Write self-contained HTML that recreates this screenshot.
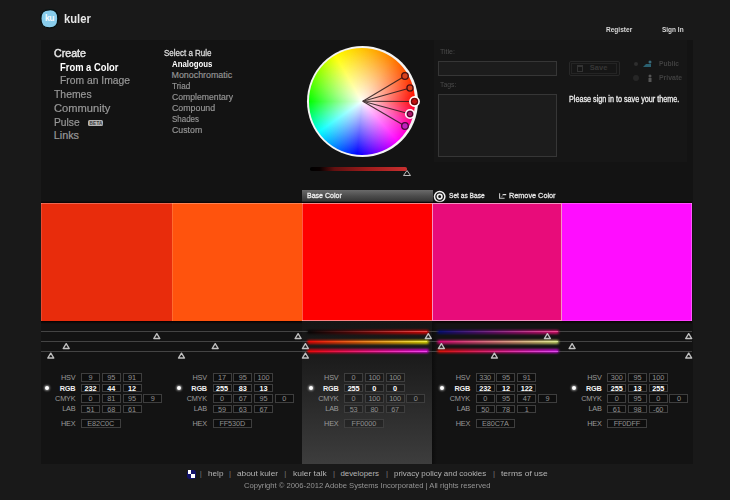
<!DOCTYPE html>
<html><head><meta charset="utf-8">
<style>
*{margin:0;padding:0;box-sizing:border-box}
html,body{width:730px;height:500px;overflow:hidden;background:#191919;font-family:"Liberation Sans",sans-serif;position:relative}
.a{position:absolute;white-space:nowrap}
.lbl{font-size:7.3px;line-height:9px;text-align:right;letter-spacing:-0.2px}
.box{height:8.6px;border:1px solid #3e3e3e;background:rgba(0,0,0,.22);font-size:7.3px;line-height:7px;text-align:center;letter-spacing:-0.1px}
</style></head><body>
<div class="a" style="left:41px;top:40px;width:652px;height:423.5px;background:#131313"></div>
<svg class="a" style="left:38px;top:7px" width="24" height="24"><path d="M11.2 2.7 C17.4 2.3 20.1 5.5 19.9 11.8 C19.8 18.2 17.6 21 11.4 20.9 C5.1 20.8 2.8 18 2.8 11.6 C2.8 5.5 5.2 3 11.2 2.7 Z" fill="#88cdec" stroke="#061010" stroke-width="1.4"/><text x="11.5" y="14.3" font-family="Liberation Sans" font-size="8.6" font-weight="bold" fill="#f4fbff" text-anchor="middle" letter-spacing="-0.4">ku</text></svg>
<div class="a" style="left:434px;top:40px;width:253px;height:122px;background:#161616"></div>
<div class="a" style="left:438px;top:61px;width:119px;height:15px;background:#1c1c1c;border:1px solid #363636"></div>
<div class="a" style="left:438px;top:94px;width:119px;height:63px;background:#1c1c1c;border:1px solid #363636"></div>
<div class="a" style="left:568.5px;top:61px;width:51px;height:15px;border:1px solid #282828;border-radius:2px;background:#161616"></div><div class="a" style="left:571px;top:63px;width:46px;height:11px;border:1px solid #242424"></div>
<div class="a" style="left:577px;top:64.5px;width:6px;height:7px;border:1px solid #333;border-top-width:2px"></div>
<div class="a" style="left:634px;top:61.5px;width:4px;height:4px;border-radius:50%;background:#2e2e2e"></div>
<div class="a" style="left:633px;top:74.5px;width:6px;height:6px;border-radius:50%;background:#262626"></div>
<svg class="a" style="left:642px;top:59px" width="12" height="26"><path d="M1 8 L4 5 L9 5 L9 8 Z" fill="#2a6070"/><circle cx="8" cy="3" r="1.5" fill="#3a6a7a"/><circle cx="8" cy="17" r="1.5" fill="#555"/><rect x="6.5" y="19" width="3" height="4" fill="#555"/></svg>
<div class="a" style="left:306.5px;top:45.8px;width:111px;height:111px;border-radius:50%;background:#f4f4f4"></div>
<div class="a" style="left:308.7px;top:48px;width:106.6px;height:106.6px;border-radius:50%;background:radial-gradient(circle closest-side,#fff 0%,rgba(255,255,255,.85) 12%,rgba(255,255,255,0) 100%),conic-gradient(from 90deg,#f00 0deg,#ff00c0 30deg,#f0f 48deg,#00f 95deg,#0ff 145deg,#0f0 180deg,#ff0 240deg,#ff8000 305deg,#f00 360deg)"></div>
<svg class="a" style="left:0;top:0" width="730" height="500">
<g stroke="#2a1a1a" stroke-width="1.1" fill="none" opacity=".85">
<line x1="362.8" y1="101.3" x2="405" y2="76"/><line x1="362.8" y1="101.3" x2="410" y2="88"/><line x1="362.8" y1="101.3" x2="414.5" y2="101.5"/><line x1="362.8" y1="101.3" x2="410" y2="114"/><line x1="362.8" y1="101.3" x2="405" y2="126"/>
</g>
<circle cx="405" cy="76" r="3.3" fill="#d8401c" stroke="#4a1010" stroke-width="1.3"/>
<circle cx="410" cy="88" r="3.1" fill="#e0401c" stroke="#4a1010" stroke-width="1.3"/>
<circle cx="414.5" cy="101.5" r="4.6" fill="#a01010" stroke="#fff" stroke-width="1.6"/>
<circle cx="414.5" cy="101.5" r="3" fill="#c01010" stroke="#4a0a0a" stroke-width="1"/>
<circle cx="410" cy="114" r="4.3" fill="#a0105a" stroke="#fff" stroke-width="1.6"/>
<circle cx="410" cy="114" r="2.7" fill="#b0106a" stroke="#4a0a2a" stroke-width="1"/>
<circle cx="405" cy="126" r="3.3" fill="#c020c0" stroke="#4a0a3a" stroke-width="1.3"/>
<path d="M407 170.5 L410.5 175.5 L403.5 175.5 Z" fill="none" stroke="#bbb" stroke-width="1"/>
</svg>
<div class="a" style="left:310px;top:167.2px;width:97px;height:3.6px;background:linear-gradient(90deg,#000 0%,#080000 10%,#601010 25%,#a01c1c 60%,#c83030 100%);border-radius:1.8px;filter:blur(0.5px)"></div>
<div class="a" style="left:302px;top:189.8px;width:130.5px;height:12px;background:linear-gradient(#6a6a6a,#4c4c4c 50%,#333)"></div>
<svg class="a" style="left:431.6px;top:189.5px" width="16" height="14"><circle cx="7.7" cy="6.6" r="5.2" fill="none" stroke="#f0f0f0" stroke-width="1.5"/><circle cx="7.7" cy="6.6" r="2.3" fill="none" stroke="#f0f0f0" stroke-width="1.6"/></svg>
<svg class="a" style="left:0;top:0" width="730" height="500"><path d="M499.6 193.2 V198.2 H504.6" fill="none" stroke="#c8c8c8" stroke-width="1.1"/><path d="M502.6 194.6 H506.2" fill="none" stroke="#e0e0e0" stroke-width="1.2"/><path d="M501.2 197 L503.2 195.4" fill="none" stroke="#777" stroke-width="0.9"/></svg>
<div class="a" style="left:41px;top:200.5px;width:651px;height:2.5px;background:linear-gradient(rgba(0,0,0,0),#0a0000)"></div>
<div class="a" style="left:41px;top:321px;width:651px;height:3px;background:linear-gradient(#080000,rgba(0,0,0,0))"></div>
<div class="a" style="left:41px;top:203px;width:130.5px;height:117.6px;background:#e82c0c;box-shadow:inset 0 1px 0 rgba(255,255,255,.28),inset 1px 0 0 rgba(255,255,255,.14);"></div>
<div class="a" style="left:171.5px;top:203px;width:130.5px;height:117.6px;background:#ff530d;box-shadow:inset 0 1px 0 rgba(255,255,255,.28),inset 1px 0 0 rgba(255,255,255,.14);"></div>
<div class="a" style="left:302px;top:203px;width:130.0px;height:117.6px;background:#ff0000;box-shadow:inset 0 1px 0 rgba(255,255,255,.5),inset 1px 0 0 rgba(255,200,160,.45),inset 0 -1px 0 rgba(255,255,255,.5);"></div>
<div class="a" style="left:432px;top:203px;width:130.0px;height:117.6px;background:#e80c7a;box-shadow:inset 0 0 0 1px rgba(255,255,255,.55);"></div>
<div class="a" style="left:562px;top:203px;width:130.0px;height:117.6px;background:#ff0dff;box-shadow:inset 0 1px 0 rgba(255,255,255,.28),inset -1px 0 0 rgba(255,255,255,.3),inset 0 -1px 0 rgba(255,255,255,.2);"></div>
<div class="a" style="left:432px;top:321px;width:5px;height:142.5px;background:linear-gradient(90deg,#0c0c0c,rgba(18,18,18,0))"></div>
<div class="a" style="left:302px;top:320.5px;width:130px;height:143px;background:linear-gradient(#151515 0%,#1b1b1b 25%,#3d3d3d 100%)"></div>
<div class="a" style="left:41px;top:331.0px;width:651px;height:1px;background:#444"></div>
<div class="a" style="left:41px;top:341.0px;width:651px;height:1px;background:#444"></div>
<div class="a" style="left:41px;top:350.5px;width:651px;height:1px;background:#444"></div>
<div class="a" style="left:306.9px;top:329.5px;width:122px;height:4px;border-radius:2px;background:linear-gradient(90deg,rgb(0,0,0),rgb(255,0,0));opacity:.78;filter:blur(1px)"></div>
<div class="a" style="left:308.4px;top:331.0px;width:119px;height:1px;background:linear-gradient(90deg,rgb(0,0,0),rgb(255,0,0));opacity:.55"></div>
<div class="a" style="left:308.4px;top:331.0px;width:119px;height:1px;background:linear-gradient(90deg,rgba(255,255,255,0),rgba(255,255,255,.25))"></div>
<div class="a" style="left:306.9px;top:339.5px;width:122px;height:4px;border-radius:2px;background:linear-gradient(90deg,rgb(255,0,0),rgb(255,255,0));opacity:.78;filter:blur(1px)"></div>
<div class="a" style="left:308.4px;top:341.0px;width:119px;height:1px;background:linear-gradient(90deg,rgb(255,0,0),rgb(255,255,0));opacity:.55"></div>
<div class="a" style="left:308.4px;top:341.0px;width:119px;height:1px;background:linear-gradient(90deg,rgba(255,255,255,0),rgba(255,255,255,.25))"></div>
<div class="a" style="left:306.9px;top:349px;width:122px;height:4px;border-radius:2px;background:linear-gradient(90deg,rgb(255,0,0),rgb(255,0,255));opacity:.78;filter:blur(1px)"></div>
<div class="a" style="left:308.4px;top:350.5px;width:119px;height:1px;background:linear-gradient(90deg,rgb(255,0,0),rgb(255,0,255));opacity:.55"></div>
<div class="a" style="left:308.4px;top:350.5px;width:119px;height:1px;background:linear-gradient(90deg,rgba(255,255,255,0),rgba(255,255,255,.25))"></div>
<div class="a" style="left:437.1px;top:329.5px;width:122px;height:4px;border-radius:2px;background:linear-gradient(90deg,rgb(0,12,122),rgb(255,12,122));opacity:.78;filter:blur(1px)"></div>
<div class="a" style="left:438.6px;top:331.0px;width:119px;height:1px;background:linear-gradient(90deg,rgb(0,12,122),rgb(255,12,122));opacity:.55"></div>
<div class="a" style="left:438.6px;top:331.0px;width:119px;height:1px;background:linear-gradient(90deg,rgba(255,255,255,0),rgba(255,255,255,.25))"></div>
<div class="a" style="left:437.1px;top:339.5px;width:122px;height:4px;border-radius:2px;background:linear-gradient(90deg,rgb(232,0,122),rgb(232,255,122));opacity:.78;filter:blur(1px)"></div>
<div class="a" style="left:438.6px;top:341.0px;width:119px;height:1px;background:linear-gradient(90deg,rgb(232,0,122),rgb(232,255,122));opacity:.55"></div>
<div class="a" style="left:438.6px;top:341.0px;width:119px;height:1px;background:linear-gradient(90deg,rgba(255,255,255,0),rgba(255,255,255,.25))"></div>
<div class="a" style="left:437.1px;top:349px;width:122px;height:4px;border-radius:2px;background:linear-gradient(90deg,rgb(232,12,0),rgb(232,12,255));opacity:.78;filter:blur(1px)"></div>
<div class="a" style="left:438.6px;top:350.5px;width:119px;height:1px;background:linear-gradient(90deg,rgb(232,12,0),rgb(232,12,255));opacity:.55"></div>
<div class="a" style="left:438.6px;top:350.5px;width:119px;height:1px;background:linear-gradient(90deg,rgba(255,255,255,0),rgba(255,255,255,.25))"></div>
<svg class="a" style="left:0;top:0" width="730" height="500"><g fill="none" stroke="#c0c0c0" stroke-width="1.4" stroke-linejoin="round"><path d="M156.8 333.7 L159.8 338.5 L153.8 338.5 Z"/><path d="M66.2 343.7 L69.2 348.5 L63.2 348.5 Z"/><path d="M50.8 353.2 L53.8 358.0 L47.8 358.0 Z"/><path d="M298.1 333.7 L301.1 338.5 L295.1 338.5 Z"/><path d="M215.2 343.7 L218.2 348.5 L212.2 348.5 Z"/><path d="M181.5 353.2 L184.5 358.0 L178.5 358.0 Z"/><path d="M428.3 333.7 L431.3 338.5 L425.3 338.5 Z"/><path d="M305.4 343.7 L308.4 348.5 L302.4 348.5 Z"/><path d="M305.4 353.2 L308.4 358.0 L302.4 358.0 Z"/><path d="M547.4 333.7 L550.4 338.5 L544.4 338.5 Z"/><path d="M441.4 343.7 L444.4 348.5 L438.4 348.5 Z"/><path d="M494.4 353.2 L497.4 358.0 L491.4 358.0 Z"/><path d="M688.7 333.7 L691.7 338.5 L685.7 338.5 Z"/><path d="M572.1 343.7 L575.1 348.5 L569.1 348.5 Z"/><path d="M688.7 353.2 L691.7 358.0 L685.7 358.0 Z"/></g></svg>
<div class="a lbl" style="left:35.40px;top:373.00px;width:40px;color:#9a9a9a;">HSV</div>
<div class="a box" style="left:81.00px;top:373.30px;width:19px;color:#909090;">9</div>
<div class="a box" style="left:101.75px;top:373.30px;width:19px;color:#909090;">95</div>
<div class="a box" style="left:122.50px;top:373.30px;width:19px;color:#909090;">91</div>
<div class="a lbl" style="left:35.40px;top:383.60px;width:40px;color:#eeeeee;font-weight:bold;">RGB</div>
<div class="a box" style="left:81.00px;top:383.90px;width:19px;color:#ffffff;font-weight:bold;">232</div>
<div class="a box" style="left:101.75px;top:383.90px;width:19px;color:#ffffff;font-weight:bold;">44</div>
<div class="a box" style="left:122.50px;top:383.90px;width:19px;color:#ffffff;font-weight:bold;">12</div>
<div class="a lbl" style="left:35.40px;top:394.10px;width:40px;color:#9a9a9a;">CMYK</div>
<div class="a box" style="left:81.00px;top:394.40px;width:19px;color:#909090;">0</div>
<div class="a box" style="left:101.75px;top:394.40px;width:19px;color:#909090;">81</div>
<div class="a box" style="left:122.50px;top:394.40px;width:19px;color:#909090;">95</div>
<div class="a box" style="left:143.25px;top:394.40px;width:19px;color:#909090;">9</div>
<div class="a lbl" style="left:35.40px;top:404.30px;width:40px;color:#9a9a9a;">LAB</div>
<div class="a box" style="left:81.00px;top:404.60px;width:19px;color:#909090;">51</div>
<div class="a box" style="left:101.75px;top:404.60px;width:19px;color:#909090;">68</div>
<div class="a box" style="left:122.50px;top:404.60px;width:19px;color:#909090;">61</div>
<div class="a lbl" style="left:35.40px;top:419.00px;width:40px;color:#9a9a9a;">HEX</div>
<div class="a box" style="left:81.00px;top:419.30px;width:39.5px;color:#909090;">E82C0C</div>
<div class="a lbl" style="left:166.95px;top:373.00px;width:40px;color:#9a9a9a;">HSV</div>
<div class="a box" style="left:212.55px;top:373.30px;width:19px;color:#909090;">17</div>
<div class="a box" style="left:233.30px;top:373.30px;width:19px;color:#909090;">95</div>
<div class="a box" style="left:254.05px;top:373.30px;width:19px;color:#909090;">100</div>
<div class="a lbl" style="left:166.95px;top:383.60px;width:40px;color:#eeeeee;font-weight:bold;">RGB</div>
<div class="a box" style="left:212.55px;top:383.90px;width:19px;color:#ffffff;font-weight:bold;">255</div>
<div class="a box" style="left:233.30px;top:383.90px;width:19px;color:#ffffff;font-weight:bold;">83</div>
<div class="a box" style="left:254.05px;top:383.90px;width:19px;color:#ffffff;font-weight:bold;">13</div>
<div class="a lbl" style="left:166.95px;top:394.10px;width:40px;color:#9a9a9a;">CMYK</div>
<div class="a box" style="left:212.55px;top:394.40px;width:19px;color:#909090;">0</div>
<div class="a box" style="left:233.30px;top:394.40px;width:19px;color:#909090;">67</div>
<div class="a box" style="left:254.05px;top:394.40px;width:19px;color:#909090;">95</div>
<div class="a box" style="left:274.80px;top:394.40px;width:19px;color:#909090;">0</div>
<div class="a lbl" style="left:166.95px;top:404.30px;width:40px;color:#9a9a9a;">LAB</div>
<div class="a box" style="left:212.55px;top:404.60px;width:19px;color:#909090;">59</div>
<div class="a box" style="left:233.30px;top:404.60px;width:19px;color:#909090;">63</div>
<div class="a box" style="left:254.05px;top:404.60px;width:19px;color:#909090;">67</div>
<div class="a lbl" style="left:166.95px;top:419.00px;width:40px;color:#9a9a9a;">HEX</div>
<div class="a box" style="left:212.55px;top:419.30px;width:39.5px;color:#909090;">FF530D</div>
<div class="a lbl" style="left:298.50px;top:373.00px;width:40px;color:#9a9a9a;">HSV</div>
<div class="a box" style="left:344.10px;top:373.30px;width:19px;color:#909090;">0</div>
<div class="a box" style="left:364.85px;top:373.30px;width:19px;color:#909090;">100</div>
<div class="a box" style="left:385.60px;top:373.30px;width:19px;color:#909090;">100</div>
<div class="a lbl" style="left:298.50px;top:383.60px;width:40px;color:#eeeeee;font-weight:bold;">RGB</div>
<div class="a box" style="left:344.10px;top:383.90px;width:19px;color:#ffffff;font-weight:bold;">255</div>
<div class="a box" style="left:364.85px;top:383.90px;width:19px;color:#ffffff;font-weight:bold;">0</div>
<div class="a box" style="left:385.60px;top:383.90px;width:19px;color:#ffffff;font-weight:bold;">0</div>
<div class="a lbl" style="left:298.50px;top:394.10px;width:40px;color:#9a9a9a;">CMYK</div>
<div class="a box" style="left:344.10px;top:394.40px;width:19px;color:#909090;">0</div>
<div class="a box" style="left:364.85px;top:394.40px;width:19px;color:#909090;">100</div>
<div class="a box" style="left:385.60px;top:394.40px;width:19px;color:#909090;">100</div>
<div class="a box" style="left:406.35px;top:394.40px;width:19px;color:#909090;">0</div>
<div class="a lbl" style="left:298.50px;top:404.30px;width:40px;color:#9a9a9a;">LAB</div>
<div class="a box" style="left:344.10px;top:404.60px;width:19px;color:#909090;">53</div>
<div class="a box" style="left:364.85px;top:404.60px;width:19px;color:#909090;">80</div>
<div class="a box" style="left:385.60px;top:404.60px;width:19px;color:#909090;">67</div>
<div class="a lbl" style="left:298.50px;top:419.00px;width:40px;color:#9a9a9a;">HEX</div>
<div class="a box" style="left:344.10px;top:419.30px;width:39.5px;color:#909090;">FF0000</div>
<div class="a lbl" style="left:430.05px;top:373.00px;width:40px;color:#9a9a9a;">HSV</div>
<div class="a box" style="left:475.65px;top:373.30px;width:19px;color:#909090;">330</div>
<div class="a box" style="left:496.40px;top:373.30px;width:19px;color:#909090;">95</div>
<div class="a box" style="left:517.15px;top:373.30px;width:19px;color:#909090;">91</div>
<div class="a lbl" style="left:430.05px;top:383.60px;width:40px;color:#eeeeee;font-weight:bold;">RGB</div>
<div class="a box" style="left:475.65px;top:383.90px;width:19px;color:#ffffff;font-weight:bold;">232</div>
<div class="a box" style="left:496.40px;top:383.90px;width:19px;color:#ffffff;font-weight:bold;">12</div>
<div class="a box" style="left:517.15px;top:383.90px;width:19px;color:#ffffff;font-weight:bold;">122</div>
<div class="a lbl" style="left:430.05px;top:394.10px;width:40px;color:#9a9a9a;">CMYK</div>
<div class="a box" style="left:475.65px;top:394.40px;width:19px;color:#909090;">0</div>
<div class="a box" style="left:496.40px;top:394.40px;width:19px;color:#909090;">95</div>
<div class="a box" style="left:517.15px;top:394.40px;width:19px;color:#909090;">47</div>
<div class="a box" style="left:537.90px;top:394.40px;width:19px;color:#909090;">9</div>
<div class="a lbl" style="left:430.05px;top:404.30px;width:40px;color:#9a9a9a;">LAB</div>
<div class="a box" style="left:475.65px;top:404.60px;width:19px;color:#909090;">50</div>
<div class="a box" style="left:496.40px;top:404.60px;width:19px;color:#909090;">78</div>
<div class="a box" style="left:517.15px;top:404.60px;width:19px;color:#909090;">1</div>
<div class="a lbl" style="left:430.05px;top:419.00px;width:40px;color:#9a9a9a;">HEX</div>
<div class="a box" style="left:475.65px;top:419.30px;width:39.5px;color:#909090;">E80C7A</div>
<div class="a lbl" style="left:561.60px;top:373.00px;width:40px;color:#9a9a9a;">HSV</div>
<div class="a box" style="left:607.20px;top:373.30px;width:19px;color:#909090;">300</div>
<div class="a box" style="left:627.95px;top:373.30px;width:19px;color:#909090;">95</div>
<div class="a box" style="left:648.70px;top:373.30px;width:19px;color:#909090;">100</div>
<div class="a lbl" style="left:561.60px;top:383.60px;width:40px;color:#eeeeee;font-weight:bold;">RGB</div>
<div class="a box" style="left:607.20px;top:383.90px;width:19px;color:#ffffff;font-weight:bold;">255</div>
<div class="a box" style="left:627.95px;top:383.90px;width:19px;color:#ffffff;font-weight:bold;">13</div>
<div class="a box" style="left:648.70px;top:383.90px;width:19px;color:#ffffff;font-weight:bold;">255</div>
<div class="a lbl" style="left:561.60px;top:394.10px;width:40px;color:#9a9a9a;">CMYK</div>
<div class="a box" style="left:607.20px;top:394.40px;width:19px;color:#909090;">0</div>
<div class="a box" style="left:627.95px;top:394.40px;width:19px;color:#909090;">95</div>
<div class="a box" style="left:648.70px;top:394.40px;width:19px;color:#909090;">0</div>
<div class="a box" style="left:669.45px;top:394.40px;width:19px;color:#909090;">0</div>
<div class="a lbl" style="left:561.60px;top:404.30px;width:40px;color:#9a9a9a;">LAB</div>
<div class="a box" style="left:607.20px;top:404.60px;width:19px;color:#909090;">61</div>
<div class="a box" style="left:627.95px;top:404.60px;width:19px;color:#909090;">98</div>
<div class="a box" style="left:648.70px;top:404.60px;width:19px;color:#909090;">-60</div>
<div class="a lbl" style="left:561.60px;top:419.00px;width:40px;color:#9a9a9a;">HEX</div>
<div class="a box" style="left:607.20px;top:419.30px;width:39.5px;color:#909090;">FF0DFF</div>
<div class="a" style="left:45.40px;top:386.10px;width:4px;height:4px;border-radius:50%;background:#fff;box-shadow:0 0 2px 1px rgba(255,255,255,.45)"></div>
<div class="a" style="left:176.95px;top:386.10px;width:4px;height:4px;border-radius:50%;background:#fff;box-shadow:0 0 2px 1px rgba(255,255,255,.45)"></div>
<div class="a" style="left:308.50px;top:386.10px;width:4px;height:4px;border-radius:50%;background:#fff;box-shadow:0 0 2px 1px rgba(255,255,255,.45)"></div>
<div class="a" style="left:440.05px;top:386.10px;width:4px;height:4px;border-radius:50%;background:#fff;box-shadow:0 0 2px 1px rgba(255,255,255,.45)"></div>
<div class="a" style="left:571.60px;top:386.10px;width:4px;height:4px;border-radius:50%;background:#fff;box-shadow:0 0 2px 1px rgba(255,255,255,.45)"></div>
<div class="a" style="left:88px;top:120.3px;width:14.8px;height:5.8px;background:#b4b4b4;border-radius:1.5px"></div><div class="a" style="left:89.6px;top:121.6px;font-size:4.6px;line-height:4px;font-weight:bold;color:#3a3a3a;letter-spacing:0.2px">BETA</div>
<div class="a" style="left:186.5px;top:469.5px;width:9px;height:9px;background:#12126a;border-radius:3px"></div><div class="a" style="left:187.5px;top:470px;width:3.5px;height:3.5px;background:#fff"></div><div class="a" style="left:191px;top:474px;width:3.5px;height:3.5px;background:#fff"></div>
<div class="a" style="left:64.00px;top:12.64px;font-size:12px;line-height:12px;color:#e6e6e6;font-weight:bold;transform:scaleX(0.9357);transform-origin:0 0;">kuler</div>
<div class="a" style="left:605.80px;top:25.78px;font-size:7.7px;line-height:7.7px;color:#d8d8d8;font-weight:bold;transform:scaleX(0.8516);transform-origin:0 0;">Register</div>
<div class="a" style="left:662.30px;top:25.78px;font-size:7.7px;line-height:7.7px;color:#d8d8d8;font-weight:bold;transform:scaleX(0.8423);transform-origin:0 0;">Sign In</div>
<div class="a" style="left:53.80px;top:47.76px;font-size:10.8px;line-height:10.8px;color:#e4e4e4;transform:scaleX(0.9875);transform-origin:0 0;-webkit-text-stroke:0.45px currentColor;">Create</div>
<div class="a" style="left:60.10px;top:61.76px;font-size:10.8px;line-height:10.8px;color:#ffffff;font-weight:bold;transform:scaleX(0.8701);transform-origin:0 0;">From a Color</div>
<div class="a" style="left:60.10px;top:75.26px;font-size:10.8px;line-height:10.8px;color:#989898;transform:scaleX(0.9556);transform-origin:0 0;-webkit-text-stroke:0.2px currentColor;">From an Image</div>
<div class="a" style="left:53.80px;top:89.16px;font-size:10.8px;line-height:10.8px;color:#989898;transform:scaleX(0.9641);transform-origin:0 0;-webkit-text-stroke:0.2px currentColor;">Themes</div>
<div class="a" style="left:53.80px;top:103.16px;font-size:10.8px;line-height:10.8px;color:#989898;transform:scaleX(1.0309);transform-origin:0 0;-webkit-text-stroke:0.2px currentColor;">Community</div>
<div class="a" style="left:53.80px;top:116.66px;font-size:10.8px;line-height:10.8px;color:#989898;transform:scaleX(0.9500);transform-origin:0 0;-webkit-text-stroke:0.2px currentColor;">Pulse</div>
<div class="a" style="left:53.80px;top:130.46px;font-size:10.8px;line-height:10.8px;color:#989898;-webkit-text-stroke:0.2px currentColor;">Links</div>
<div class="a" style="left:163.80px;top:48.77px;font-size:8.9px;line-height:8.9px;color:#dcdcdc;transform:scaleX(0.9000);transform-origin:0 0;-webkit-text-stroke:0.3px currentColor;">Select a Rule</div>
<div class="a" style="left:171.50px;top:59.67px;font-size:8.9px;line-height:8.9px;color:#ffffff;font-weight:bold;transform:scaleX(0.8804);transform-origin:0 0;">Analogous</div>
<div class="a" style="left:171.50px;top:70.77px;font-size:8.9px;line-height:8.9px;color:#949494;-webkit-text-stroke:0.18px currentColor;">Monochromatic</div>
<div class="a" style="left:171.50px;top:81.75px;font-size:8.9px;line-height:8.9px;color:#949494;transform:scaleX(0.9150);transform-origin:0 0;-webkit-text-stroke:0.18px currentColor;">Triad</div>
<div class="a" style="left:171.50px;top:92.73px;font-size:8.9px;line-height:8.9px;color:#949494;transform:scaleX(0.9746);transform-origin:0 0;-webkit-text-stroke:0.18px currentColor;">Complementary</div>
<div class="a" style="left:171.50px;top:103.71px;font-size:8.9px;line-height:8.9px;color:#949494;transform:scaleX(0.9930);transform-origin:0 0;-webkit-text-stroke:0.18px currentColor;">Compound</div>
<div class="a" style="left:171.50px;top:114.69px;font-size:8.9px;line-height:8.9px;color:#949494;transform:scaleX(0.8967);transform-origin:0 0;-webkit-text-stroke:0.18px currentColor;">Shades</div>
<div class="a" style="left:171.50px;top:125.67px;font-size:8.9px;line-height:8.9px;color:#949494;transform:scaleX(0.9867);transform-origin:0 0;-webkit-text-stroke:0.18px currentColor;">Custom</div>
<div class="a" style="left:440.00px;top:47.75px;font-size:7.5px;line-height:7.5px;color:#4a4a4a;transform:scaleX(0.9375);transform-origin:0 0;">Title:</div>
<div class="a" style="left:440.00px;top:80.85px;font-size:7.5px;line-height:7.5px;color:#4a4a4a;transform:scaleX(0.9118);transform-origin:0 0;">Tags:</div>
<div class="a" style="left:589.80px;top:63.95px;font-size:7.5px;line-height:7.5px;color:#363636;font-weight:bold;">Save</div>
<div class="a" style="left:658.50px;top:60.02px;font-size:7.3px;line-height:7.3px;color:#404040;font-weight:bold;transform:scaleX(0.9136);transform-origin:0 0;">Public</div>
<div class="a" style="left:658.50px;top:73.82px;font-size:7.3px;line-height:7.3px;color:#404040;font-weight:bold;transform:scaleX(0.9458);transform-origin:0 0;">Private</div>
<div class="a" style="left:569.00px;top:95.32px;font-size:8.6px;line-height:8.6px;color:#eeeeee;transform:scaleX(0.8397);transform-origin:0 0;-webkit-text-stroke:0.3px currentColor;">Please sign in to save your theme.</div>
<div class="a" style="left:306.80px;top:191.93px;font-size:8px;line-height:8px;color:#efefef;transform:scaleX(0.8775);transform-origin:0 0;-webkit-text-stroke:0.3px currentColor;">Base Color</div>
<div class="a" style="left:449.10px;top:191.73px;font-size:8px;line-height:8px;color:#e6e6e6;transform:scaleX(0.8256);transform-origin:0 0;-webkit-text-stroke:0.3px currentColor;">Set as Base</div>
<div class="a" style="left:508.60px;top:191.73px;font-size:8px;line-height:8px;color:#e6e6e6;transform:scaleX(0.9098);transform-origin:0 0;-webkit-text-stroke:0.3px currentColor;">Remove Color</div>
<div class="a" style="left:199.70px;top:470.31px;font-size:7.9px;line-height:7.9px;color:#777777;">|</div>
<div class="a" style="left:207.70px;top:470.31px;font-size:7.9px;line-height:7.9px;color:#b4b4b4;transform:scaleX(1.0333);transform-origin:0 0;">help</div>
<div class="a" style="left:228.90px;top:470.31px;font-size:7.9px;line-height:7.9px;color:#777777;">|</div>
<div class="a" style="left:237.00px;top:470.31px;font-size:7.9px;line-height:7.9px;color:#b4b4b4;transform:scaleX(1.0513);transform-origin:0 0;">about kuler</div>
<div class="a" style="left:284.20px;top:470.31px;font-size:7.9px;line-height:7.9px;color:#777777;">|</div>
<div class="a" style="left:292.50px;top:470.31px;font-size:7.9px;line-height:7.9px;color:#b4b4b4;transform:scaleX(1.0688);transform-origin:0 0;">kuler talk</div>
<div class="a" style="left:333.00px;top:470.31px;font-size:7.9px;line-height:7.9px;color:#777777;">|</div>
<div class="a" style="left:340.40px;top:470.31px;font-size:7.9px;line-height:7.9px;color:#b4b4b4;">developers</div>
<div class="a" style="left:385.90px;top:470.31px;font-size:7.9px;line-height:7.9px;color:#777777;">|</div>
<div class="a" style="left:394.00px;top:470.31px;font-size:7.9px;line-height:7.9px;color:#b4b4b4;transform:scaleX(1.0065);transform-origin:0 0;">privacy policy and cookies</div>
<div class="a" style="left:493.00px;top:470.31px;font-size:7.9px;line-height:7.9px;color:#777777;">|</div>
<div class="a" style="left:501.00px;top:470.31px;font-size:7.9px;line-height:7.9px;color:#b4b4b4;transform:scaleX(1.0791);transform-origin:0 0;">terms of use</div>
<div class="a" style="left:244.00px;top:482.37px;font-size:7.6px;line-height:7.6px;color:#959595;transform:scaleX(1.0069);transform-origin:0 0;">Copyright &copy; 2006-2012 Adobe Systems Incorporated | All rights reserved</div>
</body></html>
